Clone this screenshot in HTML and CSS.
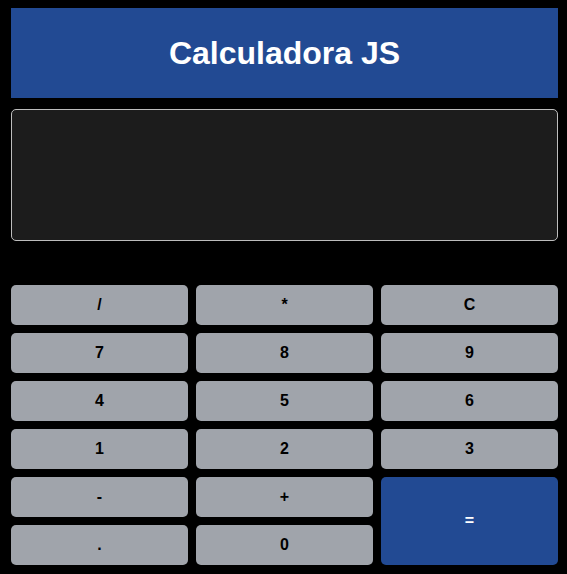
FILE: index.html
```html
<!DOCTYPE html>
<html lang="pt">
<head>
<meta charset="utf-8">
<title>Calculadora JS</title>
<link rel="stylesheet" href="styles.css">
</head>
<body>
<div class="calc">
  <header class="title-bar"><h1 class="title">Calculadora JS</h1></header>
  <div class="display"></div>
  <div class="keys">
    <button class="key">/</button>
    <button class="key">*</button>
    <button class="key">C</button>
    <button class="key">7</button>
    <button class="key">8</button>
    <button class="key">9</button>
    <button class="key">4</button>
    <button class="key">5</button>
    <button class="key">6</button>
    <button class="key">1</button>
    <button class="key">2</button>
    <button class="key">3</button>
    <button class="key">-</button>
    <button class="key">+</button>
    <button class="key key-equals">=</button>
    <button class="key">.</button>
    <button class="key">0</button>
  </div>
</div>
</body>
</html>
```
FILE: styles.css
```css
html, body {
  margin: 0;
  padding: 0;
  background: #000;
  font-family: "Liberation Sans", Arial, sans-serif;
}
.calc {
  width: 547px;
  padding: 8px 0 0 11px;
  display: flex;
  flex-direction: column;
}
.title-bar {
  width: 547px;
  height: 90px;
  background: #224a93;
  display: flex;
  align-items: center;
  justify-content: center;
}
.title {
  margin: 0;
  color: #fff;
  font-size: 32px;
  font-weight: bold;
  line-height: 1;
}
.display {
  margin-top: 11px;
  width: 545px;
  height: 130px;
  background: #1c1c1c;
  border: 1px solid #bdbdbd;
  border-radius: 5px;
}
.keys {
  margin-top: 44px;
  display: grid;
  grid-template-columns: repeat(3, 1fr);
  grid-auto-rows: 40px;
  gap: 8px;
  width: 547px;
}
.key {
  border: none;
  border-radius: 5px;
  background: #a0a4ab;
  color: #000;
  font-family: "Liberation Sans", Arial, sans-serif;
  font-size: 16px;
  font-weight: bold;
  padding: 0;
}
.key-equals {
  grid-row: span 2;
  background: #224a93;
  color: #fff;
}
```
